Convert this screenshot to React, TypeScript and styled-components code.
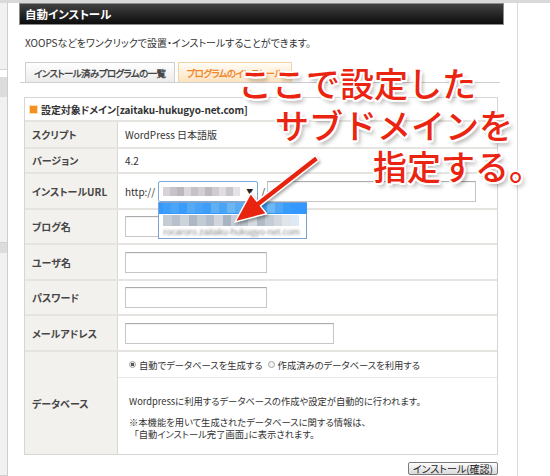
import React from "react";
import styled, { createGlobalStyle } from "styled-components";

const GlobalStyle = createGlobalStyle`
  html, body { margin: 0; padding: 0; background: #fff; }
  body {
    font-family: "Noto Sans CJK JP", "Noto Sans", sans-serif;
    font-size: 10px;
    color: #333;
    font-feature-settings: "palt";
  }
  * { box-sizing: border-box; }
`;

const Page = styled.div`
  position: relative;
  width: 550px;
  height: 476px;
  overflow: hidden;
  display: flex;
  flex-direction: column;
`;

const TopStrip = styled.div`
  flex: none;
  height: 3px;
  background: #d9d9d9;
`;

const Body = styled.div`
  flex: 1;
  display: flex;
`;

const Sidebar = styled.div`
  flex: none;
  width: 8px;
  display: flex;
  flex-direction: column;
  border-right: 1px solid #cdcdcd;
`;

const SideBlock = styled.div<{ $h?: number; $tone: "panel" | "band" | "gap" }>`
  flex: ${(p) => (p.$h ? "none" : "1")};
  height: ${(p) => (p.$h ? `${p.$h}px` : "auto")};
  background: ${(p) =>
    p.$tone === "panel" ? "#f1f1f1" : p.$tone === "band" ? "#dcdcdc" : "#fff"};
  border-bottom: ${(p) => (p.$tone === "panel" ? "1px solid #d2d2d2" : "none")};
`;

const Main = styled.div`
  flex: none;
  width: 510px;
  border-right: 1px solid #dadada;
  padding-left: 11px;
`;

const Content = styled.div`
  width: 485px;
`;

const HeaderBar = styled.div`
  height: 22px;
  border: 1px solid #8c8c8c;
  background: linear-gradient(#424242, #0c0c0c);
  color: #fff;
  font-size: 11.5px;
  font-weight: bold;
  padding-left: 5px;
  display: flex;
  align-items: center;
`;

const Lead = styled.p`
  margin: 12px 0 0 6px;
  line-height: 12px;
  color: #333;
`;

const TabBar = styled.div`
  margin: 13px 0 0 1px;
  width: 480px;
  height: 21px;
  display: flex;
  align-items: flex-end;
  gap: 3px;
  padding-left: 5px;
  border-bottom: 1px solid #cfcfcf;
`;

const Tab = styled.div<{ $active?: boolean }>`
  height: 20px;
  padding: 0 8px;
  display: flex;
  align-items: center;
  font-size: 9.5px;
  letter-spacing: -0.6px;
  -webkit-text-stroke: 0.3px currentColor;
  border: 1px solid ${(p) => (p.$active ? "#f2d3a8" : "#cfcfcf")};
  border-bottom: none;
  color: ${(p) => (p.$active ? "#f0831f" : "#3a3a3a")};
  background: ${(p) =>
    p.$active
      ? "linear-gradient(#fffcf6, #fde2bf)"
      : "linear-gradient(#ffffff, #ebebeb)"};
`;

const Panel = styled.div`
  margin: 14px 0 0 5px;
  width: 474px;
  border: 1px solid #d6d6d6;
`;

const PanelHeader = styled.div`
  height: 24px;
  display: flex;
  align-items: center;
  gap: 4px;
  padding-left: 5px;
  font-weight: bold;
  letter-spacing: -0.1px;
  color: #333;
  border-bottom: 2px solid #e6e4e1;
`;

const Bullet = styled.span`
  width: 7px;
  height: 7px;
  background: #f39020;
  box-shadow: 0 0 0 1px #fddcb6;
`;

const Row = styled.div<{ $h: number }>`
  display: grid;
  grid-template-columns: 93px 1fr;
  height: ${(p) => p.$h}px;
  border-bottom: 2px solid #e6e4e1;
  &:last-child {
    border-bottom: none;
  }
`;

const Label = styled.div`
  background: #f3f1ed;
  border-right: 1px solid #dad7d2;
  padding-left: 7px;
  display: flex;
  align-items: center;
  font-weight: bold;
  color: #464646;
`;

const Value = styled.div`
  padding-left: 7px;
  display: flex;
  align-items: center;
  color: #333;
`;

const StackValue = styled.div`
  display: flex;
  flex-direction: column;
  font-size: 9.3px;
`;

const TextBox = styled.input<{ $w: number }>`
  width: ${(p) => p.$w}px;
  height: 21px;
  margin: 0;
  padding: 0;
  border: 1px solid #c6c6c6;
  border-top-color: #ababab;
  background: #fff;
  box-shadow: inset 0 1px 1px rgba(0, 0, 0, 0.05);
  outline: none;
`;

const Scheme = styled.span`
  margin-right: 3px;
`;

const SelectBox = styled.div`
  position: relative;
  width: 100px;
  height: 21px;
  border: 1px solid #7ea8d8;
  border-radius: 2px;
  background: #fff;
  display: flex;
  align-items: center;
  padding: 0 4px;
  justify-content: space-between;
`;

const Caret = styled.span`
  font-size: 7px;
  color: #222;
  font-feature-settings: normal;
`;

const Slash = styled.span`
  margin: 0 2px 0 3px;
`;

const Mosaic = styled.div<{ $h: number }>`
  display: flex;
  height: ${(p) => p.$h}px;
`;

const Tile = styled.span<{ $c: string; $w: number }>`
  width: ${(p) => p.$w}px;
  height: 100%;
  background: ${(p) => p.$c};
`;

const DropList = styled.div`
  position: absolute;
  top: 20px;
  left: -1px;
  width: 149px;
  height: 37px;
  border: 1px solid #7ea2cf;
  background: #fff;
  z-index: 2;
  display: flex;
  flex-direction: column;
`;

const DropItem = styled.div<{ $selected?: boolean }>`
  height: 12px;
  display: flex;
  align-items: center;
  padding-left: 4px;
  background: ${(p) => (p.$selected ? "#3399ff" : "#fff")};
`;

const BlurText = styled.span`
  font-size: 9px;
  color: #888;
  filter: blur(0.9px);
  white-space: nowrap;
  font-family: "Liberation Sans", sans-serif;
`;

const RadioRow = styled.div`
  height: 26px;
  border-bottom: 1px solid #e6e6e6;
  padding-left: 11px;
  display: flex;
  align-items: center;
`;

const RadioItem = styled.label`
  display: flex;
  align-items: center;
  gap: 3px;
  margin-right: 5px;
`;

const Radio = styled.span<{ $checked?: boolean }>`
  width: 7px;
  height: 7px;
  border-radius: 50%;
  border: 1px solid #a0a0a0;
  background: ${(p) =>
    p.$checked
      ? "radial-gradient(circle, #555 0 1.6px, #eee 2px)"
      : "#f4f4f4"};
`;

const Desc = styled.div`
  padding: 17px 0 0 11px;
  line-height: 12px;
  color: #333;
`;

const DescPara = styled.p<{ $gap?: number }>`
  margin: 0 0 ${(p) => p.$gap ?? 0}px 0;
`;

const DescLine = styled.span<{ $indent?: number }>`
  display: block;
  padding-left: ${(p) => p.$indent ?? 0}px;
`;

const Actions = styled.div`
  margin: 7px 0 0 5px;
  width: 474px;
  display: flex;
  justify-content: flex-end;
`;

const Button = styled.button`
  height: 13px;
  padding: 0 4px;
  font-family: "Noto Sans CJK JP", sans-serif;
  font-feature-settings: "palt";
  font-size: 10px;
  line-height: 11px;
  color: #222;
  border: 1px solid #7a7a7a;
  border-radius: 2px;
  background: linear-gradient(#fdfdfd, #d9d9d9);
`;

const Annotation = styled.div`
  position: absolute;
  left: 238px;
  top: 62px;
  font-family: "Noto Sans CJK JP", sans-serif;
  font-feature-settings: normal;
  font-size: 34px;
  font-weight: 500;
  line-height: 41.5px;
  color: #ea2410;
  white-space: nowrap;
  pointer-events: none;
  z-index: 5;
  text-shadow: -2px 0 #fff, 2px 0 #fff, 0 -2px #fff, 0 2px #fff,
    -1.5px -1.5px #fff, 1.5px 1.5px #fff, -1.5px 1.5px #fff, 1.5px -1.5px #fff,
    3px 4px 4px rgba(0, 0, 0, 0.35);
`;

const AnnoLine = styled.span<{ $indent: number }>`
  display: block;
  margin-left: ${(p) => p.$indent}px;
`;

const ArrowSvg = styled.svg`
  position: absolute;
  left: 225px;
  top: 150px;
  width: 105px;
  height: 85px;
  z-index: 4;
  overflow: visible;
  filter: drop-shadow(1px 2px 1.5px rgba(0, 0, 0, 0.35));
`;

const selectTiles = ["#d6d2d8", "#c8c3ca", "#bcb7bf", "#dad6da", "#c5c1c7", "#d2ced3", "#bdb9be", "#cfcbd0", "#e0dde0", "#c9c6cb", "#e4e2e4"];
const blueTiles = ["#3e9ffa", "#4aa5f7", "#3a9cfa", "#55aaf4", "#47a3f7", "#3d9ef9", "#5fb0f2", "#4aa4f6", "#6bb5f0", "#58abf3", "#73baf0", "#8cc6f1", "#3d9ef9", "#6fb7f0", "#4da6f6", "#3a9cfa", "#3399ff", "#3399ff"];
const greyTiles = ["#c5ccd4", "#b8c1cb", "#cdd3da", "#aeb8c4", "#c2cad3", "#b4becb", "#d0d6dc", "#a9b5c3", "#c8cfd7", "#bcc5cf", "#d6dbe0", "#b0bbc7", "#c4ccd5", "#d2d8de", "#e0e5ea", "#dde9f4"];

const Tiles = ({ colors, w, h }: { colors: string[]; w: number; h: number }) => (
  <Mosaic $h={h}>
    {colors.map((c, i) => (
      <Tile key={i} $c={c} $w={w} />
    ))}
  </Mosaic>
);

export default function App() {
  return (
    <>
      <GlobalStyle />
      <Page>
        <TopStrip />
        <Body>
          <Sidebar>
            <SideBlock $tone="panel" $h={67} />
            <SideBlock $tone="gap" $h={7} />
            <SideBlock $tone="band" $h={20} />
            <SideBlock $tone="panel" $h={146} />
            <SideBlock $tone="band" $h={10} />
            <SideBlock $tone="panel" />
          </Sidebar>
          <Main>
            <Content>
              <HeaderBar>自動インストール</HeaderBar>
              <Lead>XOOPSなどをワンクリックで設置・インストールすることができます。</Lead>
              <TabBar>
                <Tab>インストール済みプログラムの一覧</Tab>
                <Tab $active>プログラムのインストール</Tab>
              </TabBar>
              <Panel>
                <PanelHeader>
                  <Bullet />
                  設定対象ドメイン[zaitaku-hukugyo-net.com]
                </PanelHeader>
                <Row $h={27}>
                  <Label>スクリプト</Label>
                  <Value>WordPress 日本語版</Value>
                </Row>
                <Row $h={25}>
                  <Label>バージョン</Label>
                  <Value>4.2</Value>
                </Row>
                <Row $h={36}>
                  <Label>インストールURL</Label>
                  <Value>
                    <Scheme>http://</Scheme>
                    <SelectBox>
                      <Tiles colors={selectTiles} w={7} h={9} />
                      <Caret>▼</Caret>
                      <DropList>
                        <DropItem $selected>
                          <Tiles colors={blueTiles} w={8} h={10} />
                        </DropItem>
                        <DropItem>
                          <Tiles colors={greyTiles} w={8.5} h={11} />
                        </DropItem>
                        <DropItem>
                          <BlurText>rocaroro.zaitaku-hukugyo-net.com</BlurText>
                        </DropItem>
                      </DropList>
                    </SelectBox>
                    <Slash>/</Slash>
                    <TextBox $w={209} readOnly />
                  </Value>
                </Row>
                <Row $h={35}>
                  <Label>ブログ名</Label>
                  <Value>
                    <TextBox $w={142} readOnly />
                  </Value>
                </Row>
                <Row $h={36}>
                  <Label>ユーザ名</Label>
                  <Value>
                    <TextBox $w={142} readOnly />
                  </Value>
                </Row>
                <Row $h={35}>
                  <Label>パスワード</Label>
                  <Value>
                    <TextBox $w={142} readOnly />
                  </Value>
                </Row>
                <Row $h={36}>
                  <Label>メールアドレス</Label>
                  <Value>
                    <TextBox $w={209} readOnly />
                  </Value>
                </Row>
                <Row $h={102}>
                  <Label>データベース</Label>
                  <StackValue>
                    <RadioRow>
                      <RadioItem>
                        <Radio $checked />
                        自動でデータベースを生成する
                      </RadioItem>
                      <RadioItem>
                        <Radio />
                        作成済みのデータベースを利用する
                      </RadioItem>
                    </RadioRow>
                    <Desc>
                      <DescPara $gap={9}>
                        Wordpressに利用するデータベースの作成や設定が自動的に行われます。
                      </DescPara>
                      <DescPara>
                        <DescLine>※本機能を用いて生成されたデータベースに関する情報は、</DescLine>
                        <DescLine $indent={5}>「自動インストール完了画面」に表示されます。</DescLine>
                      </DescPara>
                    </Desc>
                  </StackValue>
                </Row>
              </Panel>
              <Actions>
                <Button type="button">インストール(確認)</Button>
              </Actions>
            </Content>
          </Main>
        </Body>

        <ArrowSvg viewBox="0 0 105 85">
          <polygon
            points="93.8,10.4 35.4,55.9 41.6,63.7 10,72 25.6,43.3 31.8,51.1 90.2,5.6"
            fill="#e8230f"
            stroke="#fff"
            strokeWidth="1.5"
            strokeLinejoin="round"
          />
        </ArrowSvg>

        <Annotation>
          <AnnoLine $indent={0}>ここで設定した</AnnoLine>
          <AnnoLine $indent={37}>サブドメインを</AnnoLine>
          <AnnoLine $indent={135}>指定する。</AnnoLine>
        </Annotation>
      </Page>
    </>
  );
}
